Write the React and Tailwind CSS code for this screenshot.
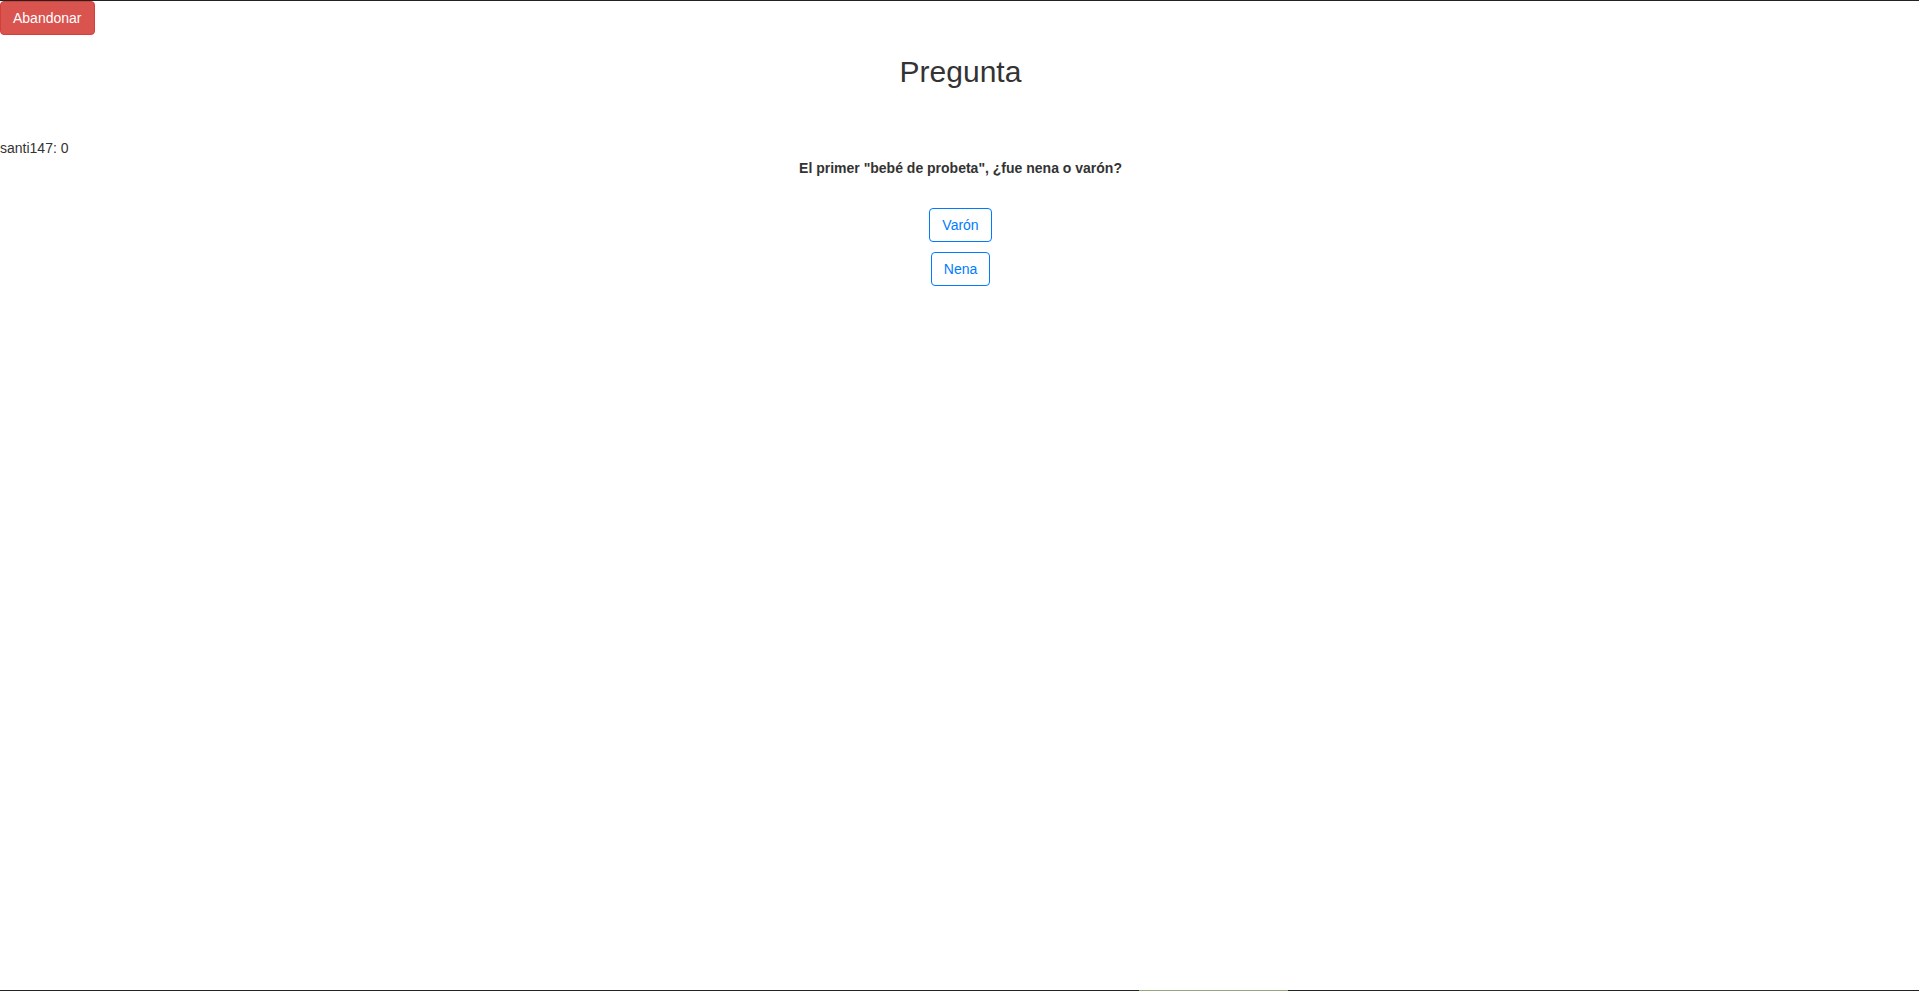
import React from 'react';

function OptionButton({ label }) {
  return (
    <button className="h-[34px] px-[12px] border border-[#007bff] rounded-[4px] text-[14px] leading-[20px] text-[#007bff] bg-white">
      {label}
    </button>
  );
}

export default function App() {
  const options = ['Varón', 'Nena'];

  return (
    <div className="h-[991px] flex flex-col bg-white border-t border-[#222] text-[#333] font-['Liberation_Sans',Helvetica,Arial,sans-serif]">
      <div className="flex-1">
        {/* Top bar */}
        <div className="flex">
          <button className="h-[34px] px-[12px] bg-[#d9534f] border border-[#d43f3a] rounded-[4px] text-white text-[14px] leading-[20px]">
            Abandonar
          </button>
        </div>

        <h2 className="mt-[20px] mb-[10px] pl-[2px] text-center text-[30px] leading-[33px] font-normal">Pregunta</h2>

        <div className="mt-[50px] text-[14px] leading-[20px]">santi147: 0</div>

        <p className="pl-[2px] text-center text-[14px] leading-[20px] font-bold">
          El primer "bebé de probeta", ¿fue nena o varón?
        </p>

        {/* Answers */}
        <div className="mt-[30px] pl-[2px] flex flex-col items-center gap-[10px]">
          {options.map((o) => (
            <OptionButton key={o} label={o} />
          ))}
        </div>
      </div>

      {/* Bottom frame line */}
      <div className="h-px bg-[#222] flex">
        <div className="ml-[1139px] w-[149px] h-px bg-[#94aa7c]"></div>
      </div>
    </div>
  );
}
